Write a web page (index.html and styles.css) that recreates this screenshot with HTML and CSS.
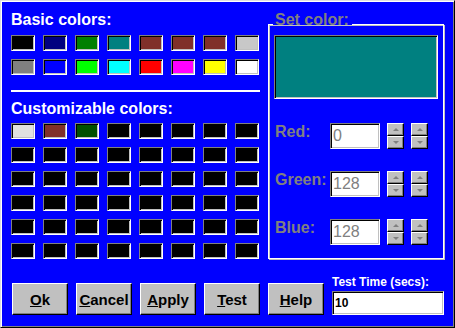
FILE: index.html
```html
<!DOCTYPE html>
<html>
	<head>
		<meta charset="UTF-8">
		<title>Color</title>
		<link rel="stylesheet" href="styles.css">
	</head>
	<body>

<div class="window">
    <div class="main">
        <!--left: palettes-->
        <div class="palette">
            <div class="heading">Basic colors:</div>
            <div class="swatches">
                <div class="sw black"></div>
                <div class="sw navy"></div>
                <div class="sw green"></div>
                <div class="sw teal"></div>
                <div class="sw maroon"></div>
                <div class="sw maroon"></div>
                <div class="sw maroon"></div>
                <div class="sw silver"></div>
                <div class="sw gray"></div>
                <div class="sw blue"></div>
                <div class="sw lime"></div>
                <div class="sw aqua"></div>
                <div class="sw red"></div>
                <div class="sw fuchsia"></div>
                <div class="sw yellow"></div>
                <div class="sw white"></div>
            </div>
            <div class="rule"></div>
            <div class="heading heading-custom">Customizable colors:</div>
            <div class="swatches swatches-custom">
                <div class="sw light"></div>
                <div class="sw maroon"></div>
                <div class="sw darkgreen"></div>
                <div class="sw black"></div>
                <div class="sw black"></div>
                <div class="sw black"></div>
                <div class="sw black"></div>
                <div class="sw black"></div>

                <div class="sw black"></div>
                <div class="sw black"></div>
                <div class="sw black"></div>
                <div class="sw black"></div>
                <div class="sw black"></div>
                <div class="sw black"></div>
                <div class="sw black"></div>
                <div class="sw black"></div>

                <div class="sw black"></div>
                <div class="sw black"></div>
                <div class="sw black"></div>
                <div class="sw black"></div>
                <div class="sw black"></div>
                <div class="sw black"></div>
                <div class="sw black"></div>
                <div class="sw black"></div>

                <div class="sw black"></div>
                <div class="sw black"></div>
                <div class="sw black"></div>
                <div class="sw black"></div>
                <div class="sw black"></div>
                <div class="sw black"></div>
                <div class="sw black"></div>
                <div class="sw black"></div>

                <div class="sw black"></div>
                <div class="sw black"></div>
                <div class="sw black"></div>
                <div class="sw black"></div>
                <div class="sw black"></div>
                <div class="sw black"></div>
                <div class="sw black"></div>
                <div class="sw black"></div>

                <div class="sw black"></div>
                <div class="sw black"></div>
                <div class="sw black"></div>
                <div class="sw black"></div>
                <div class="sw black"></div>
                <div class="sw black"></div>
                <div class="sw black"></div>
                <div class="sw black"></div>
            </div>
        </div>

        <!--right: set color group-->
        <fieldset class="setcolor">
            <legend>Set color:</legend>
            <div class="preview"></div>
            <div class="channels">
                <div class="channel">
                    <label class="lb" for="j_red">Red:</label>
                    <input class="txt" type="text" id="j_red" value="0">
                    <div class="spin"><span class="up"></span><span class="down"></span></div>
                    <div class="spin"><span class="up"></span><span class="down"></span></div>
                </div>
                <div class="channel">
                    <label class="lb" for="j_green">Green:</label>
                    <input class="txt" type="text" id="j_green" value="128">
                    <div class="spin"><span class="up"></span><span class="down"></span></div>
                    <div class="spin"><span class="up"></span><span class="down"></span></div>
                </div>
                <div class="channel">
                    <label class="lb" for="j_blue">Blue:</label>
                    <input class="txt" type="text" id="j_blue" value="128">
                    <div class="spin"><span class="up"></span><span class="down"></span></div>
                    <div class="spin"><span class="up"></span><span class="down"></span></div>
                </div>
            </div>
        </fieldset>
    </div>

    <!--bottom buttons-->
    <div class="footer">
        <button class="btn"><u>O</u>k</button>
        <button class="btn"><u>C</u>ancel</button>
        <button class="btn"><u>A</u>pply</button>
        <button class="btn"><u>T</u>est</button>
        <button class="btn"><u>H</u>elp</button>
        <div class="testtime">
            <label for="j_time">Test Time (secs):</label>
            <input class="time" type="text" id="j_time" value="10">
        </div>
    </div>
</div>

</body>
</html>
```

FILE: styles.css
```css
* {
    padding: 0;
    margin: 0;
    box-sizing: border-box;
}

body {
    font-family: "Liberation Sans", Arial, sans-serif;
}

.window {
    width: 455px;
    height: 328px;
    background: #0000ff;
    border: 1px solid;
    border-color: #dfdfdf #000 #000 #dfdfdf;
    box-shadow: inset 1px 1px 0 #fff, inset -1px -1px 0 #808080;
    padding: 10px 0 0 10px;
}

.main {
    display: flex;
    gap: 8px;
}

.palette {
    width: 249px;
}

.heading {
    font: bold 16px/18px "Liberation Sans", Arial, sans-serif;
    color: #fff;
}

.swatches {
    display: grid;
    grid-template-columns: repeat(8, 24px);
    grid-auto-rows: 16px;
    gap: 8px;
    margin-top: 6px;
}

.swatches-custom {
    margin-top: 5px;
}

.heading-custom {
    margin-top: 8px;
}

.rule {
    height: 2px;
    background: #fff;
    margin-top: 15px;
}

/* sunken 3d box */
.sw,
.preview,
.txt,
.time {
    border: 1px solid;
    border-color: #808080 #fff #fff #808080;
    box-shadow: inset 1px 1px 0 #000, inset -1px -1px 0 #c0c0c0;
}

.black { background: #000; }
.navy { background: #000080; }
.green { background: #008000; }
.teal { background: #008080; }
.maroon { background: #80302a; }
.silver { background: #c8c8c8; }
.gray { background: #808080; }
.blue { background: #0000ff; }
.lime { background: #00ff00; }
.aqua { background: #00ffff; }
.red { background: #ff0000; }
.fuchsia { background: #ff00ff; }
.yellow { background: #ffff00; }
.white { background: #fff; }
.light { background: #e0e0e0; }
.darkgreen { background: #005000; }

.setcolor {
    width: 176px;
    border: 1px solid #fff;
    box-shadow: inset 1px 1px 0 #c0c0c0, 1px 1px 0 #c0c0c0;
    padding: 0 5px;
}

.setcolor legend {
    font: bold 16px/18px "Liberation Sans", Arial, sans-serif;
    color: #808080;
    padding: 0 3px 8px 2px;
    margin-left: -1px;
}

.preview {
    height: 64px;
    margin-top: -2px;
    background: #008080;
}

.channels {
    display: flex;
    flex-direction: column;
    gap: 22px;
    margin-top: 24px;
}

.channel {
    display: flex;
    align-items: flex-start;
    height: 26px;
}

.lb {
    width: 56px;
    padding-left: 1px;
    font: bold 16px/18px "Liberation Sans", Arial, sans-serif;
    color: #808080;
}

.txt {
    width: 50px;
    height: 26px;
    padding: 0 2px;
    background: #fff;
    color: #808080;
    font: 16px "Liberation Sans", Arial, sans-serif;
    outline: none;
}

.spin {
    width: 17px;
    height: 26px;
    margin-left: 7px;
    display: flex;
    flex-direction: column;
}

.spin span {
    flex: 1;
    display: flex;
    align-items: center;
    justify-content: center;
    background: #c0c0c0;
    border: 1px solid;
    border-color: #fff #000 #000 #fff;
    box-shadow: inset -1px -1px 0 #808080;
}

.spin span::after {
    content: "";
    width: 0;
    height: 0;
    border-left: 3px solid transparent;
    border-right: 3px solid transparent;
}

.spin .up::after {
    border-bottom: 3px solid #808080;
}

.spin .down::after {
    border-top: 3px solid #808080;
}

.footer {
    display: flex;
    align-items: flex-end;
    gap: 8px;
    margin-top: 16px;
    padding-left: 1px;
}

.btn {
    width: 56px;
    height: 32px;
    background: #c0c0c0;
    border: 1px solid;
    border-color: #fff #000 #000 #fff;
    box-shadow: inset -1px -1px 0 #808080;
    font: bold 15px "Liberation Sans", Arial, sans-serif;
    color: #000;
}

.testtime {
    width: 112px;
    display: flex;
    flex-direction: column;
}

.testtime label {
    font: bold 12px/14px "Liberation Sans", Arial, sans-serif;
    color: #fff;
}

.time {
    height: 24px;
    margin-top: 2px;
    padding: 0 2px;
    background: #fff;
    font: bold 12px "Liberation Sans", Arial, sans-serif;
    color: #000;
    outline: none;
}
```
